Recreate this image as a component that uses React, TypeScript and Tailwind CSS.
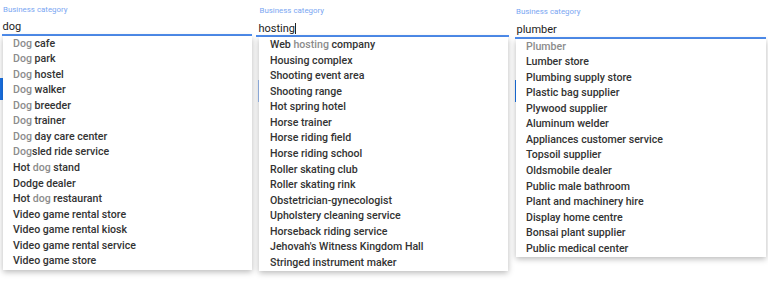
import React from "react";

type Item = { parts: { t: string; g?: boolean }[] };

const p = (...a: (string | [string])[]): Item => ({
  parts: a.map((x) => (Array.isArray(x) ? { t: x[0], g: true } : { t: x })),
});

const list1: Item[] = [
  p(["Dog"], " cafe"),
  p(["Dog"], " park"),
  p(["Dog"], " hostel"),
  p(["Dog"], " walker"),
  p(["Dog"], " breeder"),
  p(["Dog"], " trainer"),
  p(["Dog"], " day care center"),
  p(["Dog"], "sled ride service"),
  p("Hot ", ["dog"], " stand"),
  p("Dodge dealer"),
  p("Hot ", ["dog"], " restaurant"),
  p("Video game rental store"),
  p("Video game rental kiosk"),
  p("Video game rental service"),
  p("Video game store"),
];

const list2: Item[] = [
  p("Web ", ["hosting"], " company"),
  p("Housing complex"),
  p("Shooting event area"),
  p("Shooting range"),
  p("Hot spring hotel"),
  p("Horse trainer"),
  p("Horse riding field"),
  p("Horse riding school"),
  p("Roller skating club"),
  p("Roller skating rink"),
  p("Obstetrician-gynecologist"),
  p("Upholstery cleaning service"),
  p("Horseback riding service"),
  p("Jehovah's Witness Kingdom Hall"),
  p("Stringed instrument maker"),
];

const list3: Item[] = [
  p(["Plumber"]),
  p("Lumber store"),
  p("Plumbing supply store"),
  p("Plastic bag supplier"),
  p("Plywood supplier"),
  p("Aluminum welder"),
  p("Appliances customer service"),
  p("Topsoil supplier"),
  p("Oldsmobile dealer"),
  p("Public male bathroom"),
  p("Plant and machinery hire"),
  p("Display home centre"),
  p("Bonsai plant supplier"),
  p("Public medical center"),
];

function Rows({ items }: { items: Item[] }) {
  return (
    <>
      {items.map((it, i) => (
        <div key={i} className="h-[15.57px] leading-[15.57px] whitespace-pre text-[10.6px] font-medium text-[#333]">
          {it.parts.map((pt, j) => (
            <span key={j} className={pt.g ? "text-[#8c8c8c]" : ""}>
              {pt.t}
            </span>
          ))}
        </div>
      ))}
    </>
  );
}

export default function App() {
  return (
    <div
      className="relative w-[768px] h-[286px] bg-white overflow-hidden flex"
      style={{ fontFamily: "Roboto, 'Liberation Sans', sans-serif" }}
    >
      {/* Panel 1 */}
      <div className="relative w-[256px] shrink-0">
        <div className="absolute left-0 top-[78px] w-[3px] h-[22px] bg-[#1a73e8]" />
        <div className="pl-[3px] pt-[5px] text-[7.9px] leading-[9px] text-[#7aa6f2]">Business category</div>
        <div className="pl-[2.5px] pt-[6px] text-[11px] leading-[13px] text-[#222]">dog</div>
        <div className="ml-[2px] w-[250px] h-[2px] mt-[0.5px] bg-[#4f8ef0]" />
        <div className="relative z-10 ml-[3px] w-[249px] pl-[10px] pb-[1px] bg-white shadow-[0_2px_6px_rgba(0,0,0,0.28)]">
          <Rows items={list1} />
        </div>
      </div>
      {/* Panel 2 */}
      <div className="relative w-[256px] shrink-0">
        <div className="absolute left-[2px] top-[80px] w-[3px] h-[22px] bg-[#9fc0f5]" />
        <div className="pl-[3.5px] pt-[6px] text-[7.9px] leading-[9px] text-[#7aa6f2]">Business category</div>
        <div className="pl-[2.5px] pt-[6.5px] text-[11px] leading-[13px] text-[#222]">
          hosting<span className="inline-block w-[1px] h-[11px] bg-[#222] align-middle" />
        </div>
        <div className="ml-0 w-[253px] h-[2px] mt-[0.5px] bg-[#4f8ef0]" />
        <div className="relative z-10 ml-[3px] w-[249px] pl-[11px] pb-[1px] bg-white shadow-[0_2px_6px_rgba(0,0,0,0.28)]">
          <Rows items={list2} />
        </div>
      </div>
      {/* Panel 3 */}
      <div className="relative w-[256px] shrink-0">
        <div className="absolute left-[3px] top-[80px] w-[2px] h-[22px] bg-[#1a73e8]" />
        <div className="pl-[4px] pt-[6.5px] text-[7.9px] leading-[9px] text-[#7aa6f2]">Business category</div>
        <div className="pl-[4.5px] pt-[7px] text-[11px] leading-[13px] text-[#222]">plumber</div>
        <div className="ml-[3px] w-[251px] h-[2px] mt-[1px] bg-[#4f8ef0]" />
        <div className="relative z-10 ml-[4px] w-[250px] pl-[10px] pb-[1px] bg-white shadow-[0_2px_6px_rgba(0,0,0,0.28)]">
          <Rows items={list3} />
        </div>
      </div>
    </div>
  );
}
